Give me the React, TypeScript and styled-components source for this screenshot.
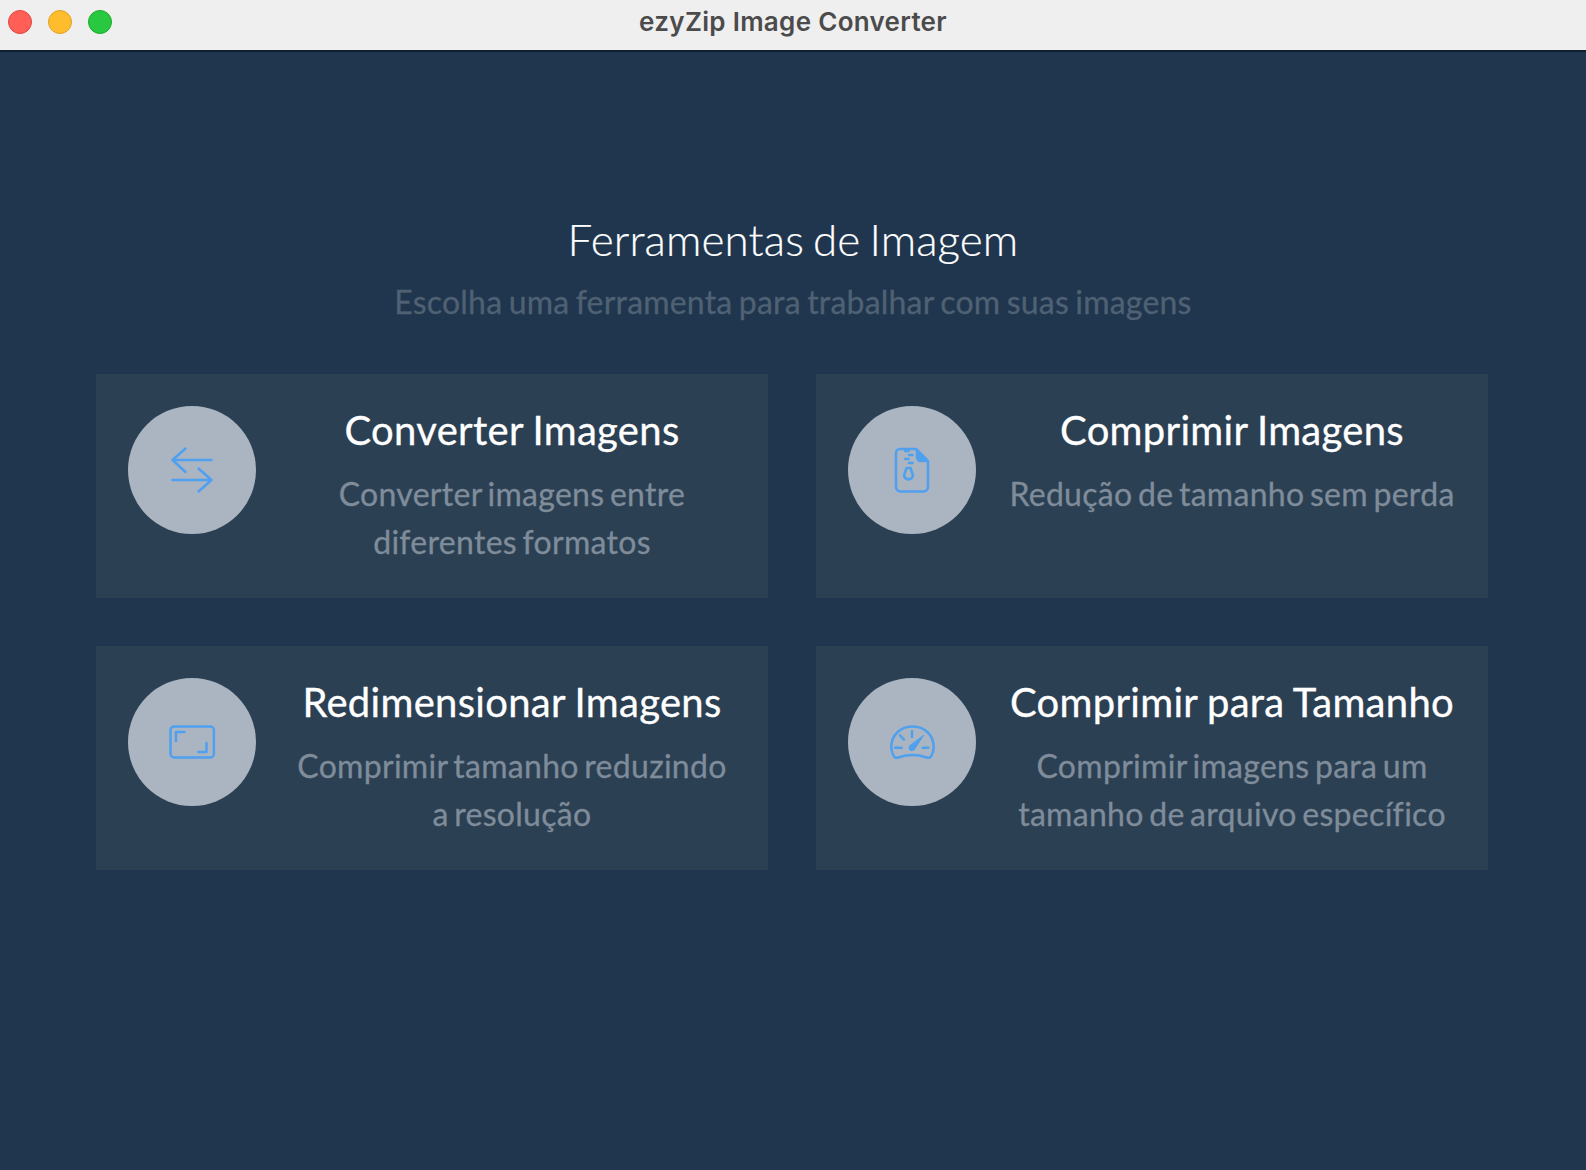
import React from 'react';
import styled, { createGlobalStyle } from 'styled-components';

const GlobalStyle = createGlobalStyle`
  html, body {
    margin: 0;
    padding: 0;
    background: #20364e;
  }
`;

const Page = styled.div`
  display: flex;
  flex-direction: column;
  height: 1170px;
  overflow: hidden;
  background: #20364e;
  font-family: Lato, "Open Sans", sans-serif;
`;

const TitleBar = styled.header`
  position: relative;
  display: flex;
  align-items: center;
  justify-content: center;
  flex: none;
  height: 52px;
  padding-bottom: 8px;
  box-sizing: border-box;
  background: #efefef;
  border-bottom: 2px solid #10202f;
`;

const TrafficLights = styled.div`
  position: absolute;
  left: 8px;
  top: 10px;
  display: flex;
  gap: 16px;
`;

const Light = styled.span<{ $fill: string; $edge: string }>`
  width: 24px;
  height: 24px;
  box-sizing: border-box;
  border-radius: 50%;
  background: ${(p) => p.$fill};
  border: 1px solid ${(p) => p.$edge};
`;

const WindowTitle = styled.div`
  font-family: Inter, "Liberation Sans", sans-serif;
  font-size: 26px;
  font-weight: 600;
  letter-spacing: 0.3px;
  color: #4b4b4b;
`;

const Main = styled.main`
  display: flex;
  flex-direction: column;
  padding: 163px 96px 0;
`;

const Heading = styled.h1`
  margin: 0;
  font-size: 44px;
  line-height: 48px;
  font-weight: 300;
  letter-spacing: 0.1px;
  word-spacing: -3px;
  -webkit-text-stroke: 0.2px #fff;
  text-align: center;
  color: #fff;
`;

const Subheading = styled.p`
  margin: 15px 0 0;
  font-size: 32px;
  line-height: 48px;
  letter-spacing: 0.2px;
  word-spacing: -2px;
  -webkit-text-stroke: 0.3px #4f6172;
  text-align: center;
  color: #4f6172;
`;

const CardGrid = styled.div`
  display: grid;
  grid-template-columns: 672px 672px;
  grid-auto-rows: 224px;
  gap: 48px;
  margin-top: 48px;
`;

const Card = styled.article`
  display: flex;
  gap: 32px;
  padding: 32px;
  box-sizing: border-box;
  background: #2c4054;
`;

const IconCircle = styled.div`
  display: flex;
  align-items: center;
  justify-content: center;
  flex: none;
  width: 128px;
  height: 128px;
  border-radius: 50%;
  background: #abb5c2;
`;

const CardBody = styled.div`
  flex: 1;
  text-align: center;
`;

const CardTitle = styled.h2`
  margin: 0;
  font-size: 40px;
  line-height: 48px;
  font-weight: 400;
  letter-spacing: 0.3px;
  word-spacing: -1px;
  -webkit-text-stroke: 0.3px #fff;
  color: #fff;
`;

const CardText = styled.p`
  margin: 16px 0 0;
  font-size: 32px;
  line-height: 48px;
  letter-spacing: 0.3px;
  word-spacing: -3px;
  -webkit-text-stroke: 0.3px #7f8c9a;
  color: #7f8c9a;
`;

const IconSvg = styled.svg`
  width: 48px;
  height: 48px;
  fill: none;
  stroke: #4fa0ee;
  stroke-width: 2.5;
  stroke-linecap: round;
  stroke-linejoin: round;
`;

const ConvertIcon = () => (
  <IconSvg viewBox="0 0 48 48">
    <path d="M43.500 14H4.500M17.500 2.500 4.500 14l13 12" />
    <path d="M4.500 34H43.500M30.500 22.500 43.500 34 30.500 45.500" />
  </IconSvg>
);

const ZipIcon = () => (
  <IconSvg viewBox="0 0 48 48">
    <path d="M12 3h16l12 12.500V41a4.500 4.500 0 0 1-4.500 4.500h-23A4.500 4.500 0 0 1 8 41V7a4 4 0 0 1 4-4z" />
    <path d="M29 4v7a4 4 0 0 0 4 4h7z" fill="#4fa0ee" />
    <path d="M17 5h3.500M21 9h3.500M17 13h3.500M21 17h3.500" />
    <path d="M18.500 22h4l2.500 7.500a5 5 0 0 1-4.500 4 5 5 0 0 1-4.500-4z" />
  </IconSvg>
);

const ResizeIcon = () => (
  <IconSvg viewBox="0 0 48 48">
    <rect x="2.500" y="8.500" width="43.400" height="31" rx="3.500" />
    <path d="M8 23V14H16.500M38.500 25V34H30.500" />
  </IconSvg>
);

const GaugeIcon = () => (
  <IconSvg viewBox="0 0 48 48">
    <path d="M24.500 8.500C12.500 8.500 3.300 17 3.300 29c0 4 1.200 7 2.700 9.500 1 1.500 3 1.500 5 .8 8.500-3 18.500-3 27 0 2 .7 4 .7 5-.8 1.500-2.500 2.700-5.500 2.700-9.500 0-12-9.200-20.500-21.200-20.500z" />
    <path d="M24 13.300V19M12 17.300l4 4.400M7 29.700h6.700M34.700 29.700h5.600" />
    <path d="M35.500 17.500 26 32 22 28z" fill="#4fa0ee" strokeWidth="1" />
    <circle cx="23.700" cy="30" r="1.800" fill="#4fa0ee" />
  </IconSvg>
);

const tools = [
  {
    title: 'Converter Imagens',
    text: 'Converter imagens entre diferentes formatos',
    icon: <ConvertIcon />,
  },
  {
    title: 'Comprimir Imagens',
    text: 'Redução de tamanho sem perda',
    icon: <ZipIcon />,
  },
  {
    title: 'Redimensionar Imagens',
    text: 'Comprimir tamanho reduzindo a resolução',
    icon: <ResizeIcon />,
  },
  {
    title: 'Comprimir para Tamanho',
    text: 'Comprimir imagens para um tamanho de arquivo específico',
    icon: <GaugeIcon />,
  },
];

const App: React.FC = () => {
  return (
    <Page>
      <GlobalStyle />
      <TitleBar>
        <TrafficLights>
          <Light $fill="#ff5f57" $edge="#e0443e" />
          <Light $fill="#ffbd2e" $edge="#dea123" />
          <Light $fill="#28c840" $edge="#1aab29" />
        </TrafficLights>
        <WindowTitle>ezyZip Image Converter</WindowTitle>
      </TitleBar>
      <Main>
        <Heading>Ferramentas de Imagem</Heading>
        <Subheading>Escolha uma ferramenta para trabalhar com suas imagens</Subheading>
        <CardGrid>
          {tools.map((tool) => (
            <Card key={tool.title}>
              <IconCircle>{tool.icon}</IconCircle>
              <CardBody>
                <CardTitle>{tool.title}</CardTitle>
                <CardText>{tool.text}</CardText>
              </CardBody>
            </Card>
          ))}
        </CardGrid>
      </Main>
    </Page>
  );
};

export default App;
